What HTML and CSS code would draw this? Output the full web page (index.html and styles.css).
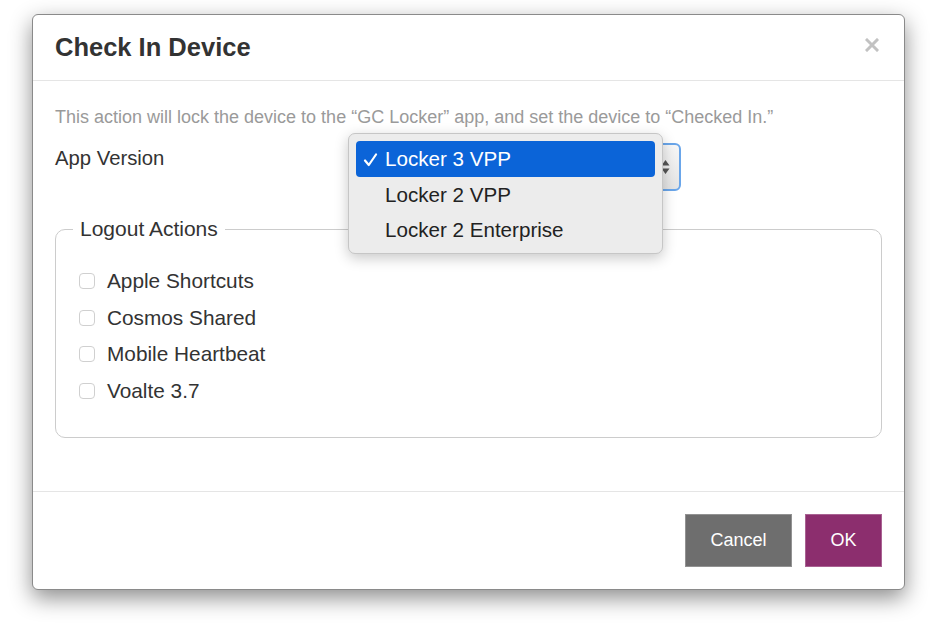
FILE: index.html
```html
<html>
<head>
<title>Check In Device</title>
<link rel="stylesheet" href="styles.css">
</head>
<body>

<div class="dialog">
  <div class="dialog-header">
    <h4 class="dialog-title">Check In Device</h4>
    <span class="close">
      <svg width="14" height="14" viewBox="0 0 14 14"><path d="M2 2L12 12M12 2L2 12" stroke="#c2c2c2" stroke-width="3" stroke-linecap="square"/></svg>
    </span>
  </div>

  <div class="dialog-body">
    <p class="hint">This action will lock the device to the “GC Locker” app, and set the device to “Checked In.”</p>

    <div class="form-row">
      <label class="row-label">App Version</label>
      <div class="select-wrap">
        <div class="select">
          <span class="arrows">
            <svg width="9" height="16" viewBox="0 0 9 16"><path d="M4.5 1L8.5 6.5H0.5Z M4.5 15L8.5 9.5H0.5Z" fill="#555"/></svg>
          </span>
        </div>
        <ul class="popup">
          <li class="selected">
            <svg class="tick" width="15" height="14" viewBox="0 0 15 14"><path d="M2 7.5L5.8 12L13 1.5" fill="none" stroke="#fff" stroke-width="2.2" stroke-linecap="round" stroke-linejoin="round"/></svg>
            Locker 3 VPP
          </li>
          <li>Locker 2 VPP</li>
          <li>Locker 2 Enterprise</li>
        </ul>
      </div>
    </div>

    <fieldset class="actions">
      <legend>Logout Actions</legend>
      <label class="check"><span class="box"></span>Apple Shortcuts</label>
      <label class="check"><span class="box"></span>Cosmos Shared</label>
      <label class="check"><span class="box"></span>Mobile Heartbeat</label>
      <label class="check"><span class="box"></span>Voalte 3.7</label>
    </fieldset>
  </div>

  <div class="dialog-footer">
    <button class="btn btn-cancel">Cancel</button>
    <button class="btn btn-ok">OK</button>
  </div>
</div>

</body>
</html>
```

FILE: styles.css
```css
body {
  margin: 0;
  background-color: #ffffff;
  font-family: "Liberation Sans", Arial, sans-serif;
  color: #333333;
}
div.dialog {
  box-sizing: border-box;
  width: 873px;
  height: 576px;
  margin: 14px 0 0 32px;
  display: flex;
  flex-direction: column;
  background-color: #ffffff;
  border: 1px solid #8a8a8a;
  border-radius: 6px;
  box-shadow: 0 8px 22px rgba(0, 0, 0, 0.45);
}
div.dialog-header {
  height: 65px;
  padding: 0 22px;
  display: flex;
  align-items: center;
  justify-content: space-between;
  border-bottom: 1px solid #e5e5e5;
}
h4.dialog-title {
  margin: 0;
  font-size: 25.5px;
  font-weight: bold;
  color: #333333;
}
span.close {
  display: flex;
  margin-right: 3px;
  margin-top: -6px;
}
div.dialog-body {
  flex: 1;
  padding: 24px 22px 0 22px;
}
p.hint {
  margin: 0;
  font-size: 18px;
  line-height: 24px;
  color: #9a9a9a;
}
div.form-row {
  display: flex;
  margin-top: 14px;
}
label.row-label {
  width: 295px;
  padding-top: 3px;
  font-size: 20.3px;
  line-height: 24px;
  color: #333333;
}
div.select-wrap {
  position: relative;
}
div.select {
  box-sizing: border-box;
  width: 331px;
  height: 48px;
  border: 2px solid #6aa6ea;
  border-radius: 6px;
  background: linear-gradient(#f7f7f7, #e4e4e4);
  display: flex;
  align-items: center;
  justify-content: flex-end;
  padding-right: 9px;
}
span.arrows {
  display: flex;
}
ul.popup {
  position: absolute;
  left: -2px;
  top: -10px;
  box-sizing: border-box;
  width: 315px;
  margin: 0;
  padding: 7px 7px 6px 7px;
  list-style: none;
  background-color: #ececec;
  border: 1px solid #c6c6c6;
  border-radius: 7px;
  box-shadow: 0 4px 14px rgba(0, 0, 0, 0.22);
}
ul.popup li {
  position: relative;
  height: 35px;
  padding-left: 29px;
  font-size: 20.6px;
  line-height: 35px;
  color: #222222;
  border-radius: 4px;
}
ul.popup li.selected {
  height: 36px;
  line-height: 36px;
  background-color: #0b64d8;
  color: #ffffff;
}
svg.tick {
  position: absolute;
  left: 7px;
  top: 12px;
}
fieldset.actions {
  margin: 26px 0 0 0;
  padding: 22px 22px 28px 23px;
  border: 1px solid #cccccc;
  border-radius: 10px;
}
fieldset.actions legend {
  margin-left: -6px;
  padding: 0 7px;
  font-size: 21px;
  line-height: 24px;
  color: #333333;
}
label.check {
  display: flex;
  align-items: center;
  height: 36.6px;
  font-size: 20.8px;
  color: #333333;
}
span.box {
  box-sizing: border-box;
  width: 16px;
  height: 16px;
  margin-right: 12px;
  border: 1px solid #d0d0d0;
  border-radius: 4px;
  background-color: #ffffff;
}
div.dialog-footer {
  display: flex;
  justify-content: flex-end;
  gap: 13px;
  padding: 22px 22px 22px 22px;
  border-top: 1px solid #e5e5e5;
}
button.btn {
  height: 53px;
  border: 1px solid rgba(255, 255, 255, 0.25);
  font-family: "Liberation Sans", Arial, sans-serif;
  font-size: 18px;
  color: #ffffff;
  cursor: pointer;
}
button.btn-cancel {
  width: 107px;
  background-color: #6e6e6e;
}
button.btn-ok {
  width: 77px;
  background-color: #8c2e6e;
}
```
